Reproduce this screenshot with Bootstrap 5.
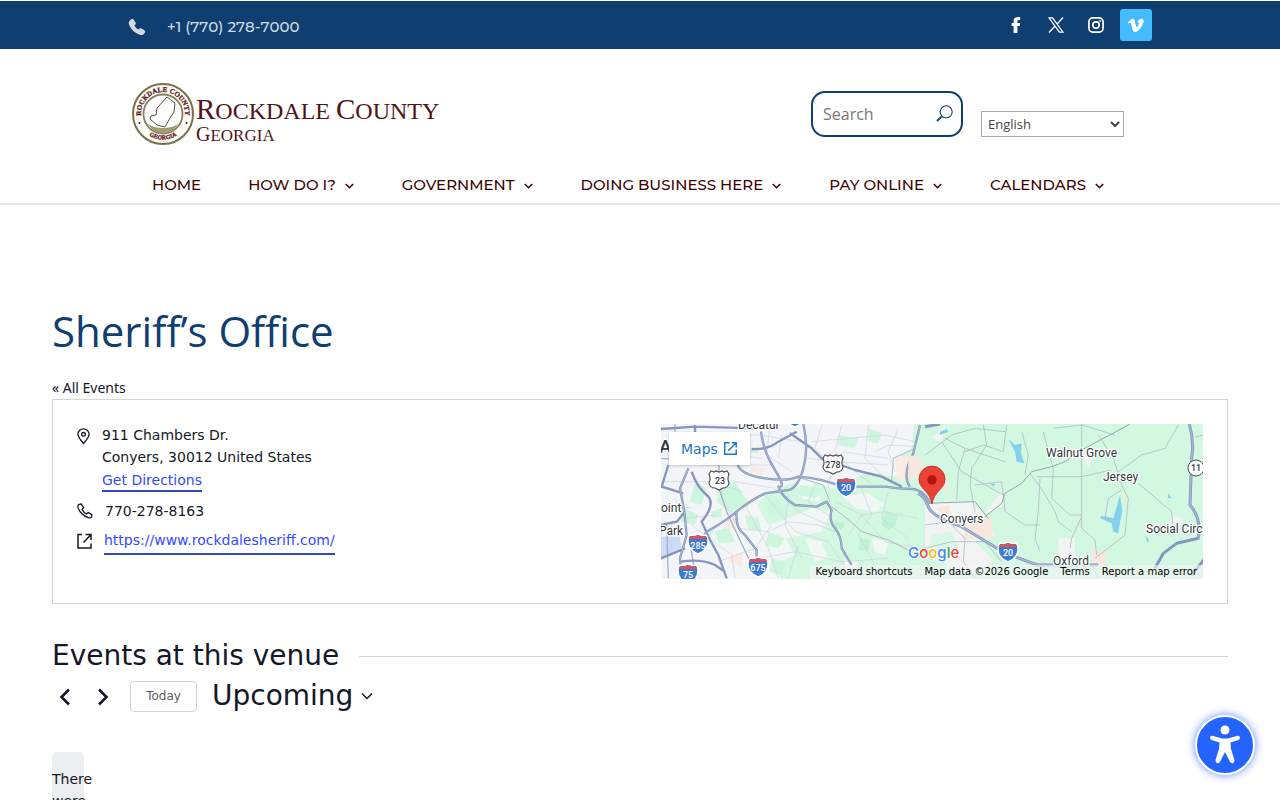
<!DOCTYPE html>
<html lang="en">
<head>
<meta charset="utf-8">
<meta name="viewport" content="width=device-width, initial-scale=1">
<title>Sheriff’s Office – Rockdale County, Georgia</title>
<link href="https://cdn.jsdelivr.net/npm/bootstrap@5.3.0/dist/css/bootstrap.min.css" rel="stylesheet">
<style>
:root{--navy:#0f3f70;--ink:#141827;--sans:"DejaVu Sans",sans-serif;--brand:Montserrat,Inter,sans-serif}
body{font-family:var(--sans);font-size:14px;line-height:22px;color:var(--ink);background:#fff;padding-top:1px}
.wrap-site{width:80%;margin:0 auto}
.wrap-main{padding:0 52px}
.topbar{background:var(--navy);min-height:48px}
.topbar .tel{font:500 15px/24px var(--brand);font-kerning:none;color:#cfd9e2;text-decoration:none;gap:21px;padding-top:3px}
.social{width:32px;height:32px;border-radius:3px;color:#fff}
.social-on{background:#45bbff}
.masthead{border-bottom:2px solid #e5e5e5}
.brandmark{color:#501418;font-family:"Liberation Serif",serif;text-decoration:none;margin-top:34px}
.brandmark .names{padding-top:12px}
.brandmark .t1{font-size:24px;line-height:28px}
.brandmark .t1 b{font-weight:400;font-size:29px}
.brandmark .t2{font-size:17px;line-height:18px}
.brandmark .t2 b{font-weight:400;font-size:20px}
.searchbox{width:152px;height:46px;border:2px solid var(--navy);border-radius:14px;padding:0 8px 0 10px;margin-top:42px}
.searchbox input{border:0;outline:0;width:100%;min-width:0;padding:0;font:16px/24px "Open Sans",sans-serif;background:none}
.searchbox input::placeholder{color:#757575}
.searchbox button{border:0;background:none;padding:0 0 2px;line-height:0;color:var(--navy)}
.lang{width:143px;height:26px;border:1px solid #a9a9a9;background:#fff;color:#444;font:13px/18px "Open Sans",sans-serif;padding:0 2px;margin:62px 28px 0 18px}
.mainnav{padding:26px 47px 6px 24px}
.mainnav a{font:500 15px/24px var(--brand);color:#3e0303;text-decoration:none;gap:8px}
.mainnav svg{margin-top:2px}
h1{font:400 42px/50px "Open Sans",sans-serif;color:var(--navy);margin:101px 0 20px}
.back{color:var(--ink);text-decoration:none;font:14px/23px "Noto Sans",sans-serif}
.venue{border:1px solid #d5d5d5;padding:24px}
.venue .row{--bs-gutter-x:42px}
.venue a{color:#334aff;text-decoration:none;border-bottom:2px solid #334aba}
.venue .go{line-height:20px;display:inline-block;margin-top:2px}
.venue .webrow{margin-top:5px}
.venue .web{line-height:26px}
.mapbox{height:155px;overflow:hidden;background:#d3f8e2}
.mapbox>svg{display:block;width:100%;height:100%}
.mapbox .open{top:8px;left:8px;background:#fff;color:#1a73c8;border:0;height:33px;padding:0 13px 0 12px;gap:6px;box-shadow:0 1px 3px rgba(0,0,0,.2)}
.mapbox .legal{bottom:0;right:0;font-size:10px;line-height:14px;background:rgba(245,245,245,.6)}
.mapbox .legal a,.mapbox .legal span{color:#000;border:0;padding:0 6px}
.venue-events{margin-top:32px;gap:20px}
h2{font:400 28px/40px var(--sans);margin:0}
.rule{height:1px;background:#d5d5d5}
.iconbtn{border:0;background:none;padding:0;width:26px;height:30px;color:var(--ink)}
.iconbtn+.iconbtn{margin:0 14px 0 12px}
.today{border:1px solid #d5d5d5;border-radius:4px;background:#fff;color:#5d5d5d;font:12px/18px var(--sans);height:31px;width:67px}
.upcoming{border:0;background:none;padding:0;font:28px/40px var(--sans);color:var(--ink);gap:8px;margin-left:15px}
.notice{width:32px;background:#eceef0;border-radius:4px;padding:16px 0;margin-top:36px}
.a11y{width:60px;height:60px;right:25px;bottom:25px;border:2px solid #fff;background:#2563ff;box-shadow:0 0 9px rgba(37,99,255,.75)}
</style>
</head>
<body>
<div class="topbar d-flex align-items-center">
  <div class="wrap-site d-flex justify-content-between align-items-center">
    <a class="tel d-flex align-items-center" href="tel:+17702787000">
      <svg width="18" height="18" viewBox="0 0 18 18" fill="currentColor" aria-hidden="true"><path d="M1.200 3.200 3.200 1.200Q4.600.3 5.500 1.500L7.600 4.400Q8.200 5.500 7.400 6.400L6.400 7.600Q7.500 10 10.400 11.600L11.600 10.600Q12.600 9.900 13.600 10.500L16.600 12.600Q17.700 13.500 17 14.600L15.300 16.500Q14 17.500 11.500 16.700 3.500 13.500 1 6.500.4 4.600 1.200 3.200Z"/></svg>
      <span>+1 (770) 278-7000</span></a>
    <nav class="d-flex gap-2" aria-label="Social">
      <a class="social d-flex align-items-center justify-content-center" href="#" aria-label="Facebook"><svg width="16" height="16" viewBox="0 0 16 16" fill="currentColor"><path d="M5.600 16V9H3.600V6H5.600V4.200Q5.600 0 10 0H12.200V3H10.600Q9.400 3 9.400 4.200V6H12.200L11.800 9H9.400V16Z"/></svg></a>
      <a class="social d-flex align-items-center justify-content-center" href="#" aria-label="X"><svg width="16" height="16" viewBox="0 0 16 16" fill="none" stroke="currentColor" stroke-width="1.300"><path d="M1 .8H4.600L15 15.200H11.400ZM15 .5 9 7.200M7 9 1 15.500"/></svg></a>
      <a class="social d-flex align-items-center justify-content-center" href="#" aria-label="Instagram"><svg width="16" height="16" viewBox="0 0 17 17" fill="none" stroke="currentColor" stroke-width="1.800"><rect x="1" y="1" width="15" height="15" rx="4"/><circle cx="8.500" cy="8.500" r="3.400"/><circle cx="12.800" cy="4.200" r=".6" fill="currentColor" stroke-width=".8"/></svg></a>
      <a class="social social-on d-flex align-items-center justify-content-center" href="#" aria-label="Vimeo"><svg width="16" height="15" viewBox="0 0 17 16" fill="currentColor"><path d="M0 4.500Q3.500 1 5 .9C7.500.7 7.500 4 8 6.500 8.500 9 8.800 9.600 9.400 9.500 10.300 9.200 11.800 6.500 11.700 5.500 11.600 4.400 10.600 4.600 9.800 4.900 10.600 2 12.500.5 14.700.7 17 .9 17 3.300 16.300 5.200 14.800 9 10.500 15 7.500 15 5.300 15 4.500 11 3.600 7.500 3.200 5.700 2.900 4.900 2.300 5Q1.800 5.100.8 5.800Z"/></svg></a>
    </nav>
  </div>
</div>

<header class="masthead">
  <div class="wrap-site">
    <div class="d-flex align-items-start">
      <a class="brandmark d-flex me-auto" href="#">
        <svg class="ms-1" width="64" height="64" viewBox="0 0 64 64" aria-hidden="true">
          <circle cx="31" cy="31" r="30" fill="#fffdf8" stroke="#77714b" stroke-width="2"/>
          <circle cx="31" cy="31" r="19.500" fill="#fff" stroke="#86805d" stroke-width="1.800"/>
          <path d="M16 41Q22 45 31 45 40 45 46 41 41 50 31 50.500 21 50 16 41Z" fill="#a19c74"/>
          <path d="M35 14 43 20 42 29 38 35 33 44 25 42 18 36 19 33 24 32 25 25Z" fill="#fff" stroke="#575044" stroke-width="1"/>
          <path id="arcTop" d="M12 42A22 22 0 1 1 50 42" fill="none"/>
          <path id="arcLow" d="M14 50A25.500 25.500 0 0 0 48 50" fill="none"/>
          <g font-family="Liberation Serif,serif" font-weight="700" font-size="7" fill="#601a20" stroke="#601a20" stroke-width=".3" text-anchor="middle">
            <text><textPath href="#arcTop" startOffset="50%">ROCKDALE COUNTY</textPath></text>
            <text font-size="6"><textPath href="#arcLow" startOffset="50%">GEORGIA</textPath></text></g>
          <circle cx="7.500" cy="40" r="1" fill="#601a20"/><circle cx="54.500" cy="40" r="1" fill="#601a20"/>
        </svg>
        <span class="names d-block"><span class="t1 d-block"><b>R</b>OCKDALE <b>C</b>OUNTY</span><span class="t2 d-block"><b>G</b>EORGIA</span></span>
      </a>
      <form class="searchbox d-flex align-items-center" role="search">
        <input type="search" placeholder="Search" aria-label="Search">
        <button type="button" aria-label="Search"><svg width="17" height="17" viewBox="0 0 17 17" fill="none" stroke="currentColor" stroke-width="1.100"><circle cx="10.200" cy="6.800" r="6"/><path d="M5.900 11.100 1 16" stroke-width="1.800"/></svg></button>
      </form>
      <select class="lang" aria-label="Language"><option>English</option></select>
    </div>
    <nav class="mainnav d-flex justify-content-between" aria-label="Main">
      <a class="d-flex align-items-center" href="#">HOME</a>
      <a class="d-flex align-items-center" href="#">HOW DO I? <svg width="11" height="8" viewBox="0 0 11 8" fill="none" stroke="currentColor" stroke-width="1.600"><path d="M1.800 2 5.500 5.700 9.200 2"/></svg></a>
      <a class="d-flex align-items-center" href="#">GOVERNMENT <svg width="11" height="8" viewBox="0 0 11 8" fill="none" stroke="currentColor" stroke-width="1.600"><path d="M1.800 2 5.500 5.700 9.200 2"/></svg></a>
      <a class="d-flex align-items-center" href="#">DOING BUSINESS HERE <svg width="11" height="8" viewBox="0 0 11 8" fill="none" stroke="currentColor" stroke-width="1.600"><path d="M1.800 2 5.500 5.700 9.200 2"/></svg></a>
      <a class="d-flex align-items-center" href="#">PAY ONLINE <svg width="11" height="8" viewBox="0 0 11 8" fill="none" stroke="currentColor" stroke-width="1.600"><path d="M1.800 2 5.500 5.700 9.200 2"/></svg></a>
      <a class="d-flex align-items-center" href="#">CALENDARS <svg width="11" height="8" viewBox="0 0 11 8" fill="none" stroke="currentColor" stroke-width="1.600"><path d="M1.800 2 5.500 5.700 9.200 2"/></svg></a>
    </nav>
  </div>
</header>

<main class="wrap-main">
  <h1>Sheriff’s Office</h1>
  <a class="back d-block" href="#">« All Events</a>
  <section class="venue">
    <div class="row">
      <div class="col-6">
        <div class="d-flex">
          <svg class="mt-1 me-2" width="13" height="17" viewBox="0 0 14 18" fill="none" stroke="currentColor" stroke-width="1.400"><path d="M7 16.500Q1 10 1 6.700A6 6 0 0 1 13 6.700Q13 10 7 16.500Z"/><circle cx="7" cy="6.700" r="2"/></svg>
          <address class="mb-0 ps-1">911 Chambers Dr.<br>Conyers, 30012 United States<br><a class="go" href="#">Get Directions</a></address>
        </div>
        <div class="d-flex align-items-center mt-2"><svg class="me-2" width="16" height="16" viewBox="0 0 17 17" fill="none" stroke="currentColor" stroke-width="1.400" stroke-linejoin="round"><path d="M1.500 1.800 4.500 1 7 5 5.300 6.800Q7 10 10 11.700L11.800 10 15.800 12.300 15.300 15Q14.300 16.300 12 15.600 4 12.500 1.200 5.200.7 3 1.500 1.800Z"/></svg><span class="ps-1">770-278-8163</span></div>
        <div class="webrow d-flex align-items-center"><svg class="me-2" width="15" height="16" viewBox="0 0 15 16" fill="none" stroke="currentColor" stroke-width="1.500"><path d="M5 1.500H1V15H14V10.500M8.500 1.500H14V7M14 1.500 6.500 9.500"/></svg><a class="web ms-1" href="#">https://www.rockdalesheriff.com/</a></div>
      </div>
      <div class="col-6">
        <div class="mapbox position-relative">
          <svg viewBox="0 0 542 155" preserveAspectRatio="xMidYMid slice" role="img" aria-label="Map of Conyers">
            <svg width="542" height="155" viewBox="0 0 1626 465">
              <rect width="1626" height="465" fill="#d3f8e2"/>
              <g transform="translate(-18 -27)" stroke-linejoin="round">
                <path d="M0 0H780L770 100 720 130 745 190 640 170 530 220 450 190 370 220 330 240 290 290 200 310 150 370 180 500H0Z" fill="#f4f5f8"/>
                <path d="M190 320 300 260 340 330 400 310 470 280 530 290 500 350 390 370 420 420 350 450 380 492 180 492 150 400Z" fill="#f3f6f7"/>
                <path d="M560 240 640 235 690 270 660 290 600 280ZM570 430 610 440 600 470 570 475ZM450 370 500 380 520 430 480 440ZM420 190 470 190 500 260 440 250ZM650 370 700 380 690 420 660 410Z" fill="#f0f7f5"/>
                <path d="M195 205 240 200 285 270 230 295 185 260ZM640 40 680 55 670 85 640 80ZM550 60 610 70 600 100 550 90ZM120 200 155 220 140 270 105 260ZM180 350 220 335 240 380 190 385ZM435 210 510 220 480 250 430 240ZM330 260 370 250 390 300 345 310ZM270 300 310 310 320 350 280 345ZM285 100 310 95 310 115 285 115ZM70 270 130 300 120 330 80 320ZM340 350 390 370 370 400 330 390ZM350 430 390 440 380 480 345 470ZM170 290 200 280 200 305 170 310Z" fill="#cdf6de"/>
                <path d="M720 120 770 125 765 205 725 190ZM290 150 330 160 320 180 285 175ZM215 310 245 310 235 345 205 340ZM230 420 265 410 260 455 220 440ZM40 120 60 130 45 145ZM520 130 545 150 530 170Z" fill="#f8ebe4"/>
                <path d="M690 290 730 300 720 335 700 345 680 330ZM615 370 645 375 640 410 610 405ZM540 320 570 325 560 345 535 340Z" fill="#bff1d4"/>
                <path d="M18 365H75L80 398 18 430Z" fill="#cbdaf5"/>
                <g fill="none" stroke="#ccd2dc" stroke-width="2">
                  <path d="M120 60H310L440 80M270 25V140M345 30 335 120 410 170M500 30 480 100 530 150 520 220M470 80 690 60 780 80M560 30 540 110 600 170 650 205M640 30 630 130 690 190M18 200H180L260 230M60 250 90 310 180 300M110 330 230 420 240 490M200 190V250L250 340 340 350 400 320 490 330 540 350M270 270 340 400 370 490M330 240 420 350 520 380 580 470M400 240 390 330 440 430M480 210 460 260 520 300M540 260 620 300 690 380 790 400M620 220 650 300 610 360 660 450M700 230 680 310 760 370M310 430 420 410 560 440 700 430M430 390 400 490M660 110 700 90 780 95M730 40 700 110 720 170M560 110 700 130M240 200 360 220 430 290 520 330M18 270H60L110 280M50 320V400M140 150H350M250 120 320 130M580 360 620 300 690 290 790 310M380 60 370 130M460 130 540 140 700 150M190 440 300 400 350 330"/>
                </g>
                <g fill="none" stroke="#a7afb9" stroke-width="2.500"><path d="M530 275Q590 320 620 350L700 375 760 405 790 400M440 190 505 210 525 260M710 200 715 130 780 100"/></g>
                <path d="M192 130V220L215 290 245 355 295 460M60 27V120M18 130 120 140M35 330 40 490M105 380 120 480M120 60 270 55" fill="none" stroke="#a5b0c8" stroke-width="4"/>
                <g id="hwWest" fill="none" stroke="#8696bc" stroke-width="7">
                  <path d="M100 160 75 220 88 290 95 360 75 430 80 492M248 150Q260 180 330 190T430 185Q500 190 560 215H690Q730 222 770 222T840 290M18 42 120 35 300 40M318 50Q325 110 360 165T370 215Q385 250 420 270L485 275 515 260 530 285Q520 315 540 340T560 400L590 450M445 27Q462 100 445 160T400 225L330 235Q280 260 245 290T155 350L130 390M290 102Q340 105 370 80L425 50M405 55 470 100 500 130 600 165 680 185 740 215M795 30 775 115Q740 180 765 215M245 290Q240 340 270 360L305 405V470M110 170Q125 215 155 240T140 320Q160 370 190 420L215 490M40 150 20 215 85 235M18 430 90 400M75 440Q140 430 180 450L210 470M18 330 65 320 90 290M120 30V90"/>
                </g>
                <path d="M100 160 75 220 88 290 95 360 75 430 80 492M248 150Q260 180 330 190T430 185Q500 190 560 215H690Q730 222 770 222T840 290M318 50Q325 110 360 165T370 215Q385 250 420 270L485 275 515 260 530 285Q520 315 540 340T560 400L590 450M445 27Q462 100 445 160T400 225L330 235Q280 260 245 290T155 350L130 390M795 30 775 115Q740 180 765 215M245 290Q240 340 270 360L305 405V470" fill="none" stroke="#a8b7d4" stroke-width="3"/>
              </g>
              <g transform="translate(792 -27)" stroke-linejoin="round">
                <path d="M0 270 60 260 140 260 195 320 210 365 150 380 210 440 110 480 0 400ZM60 30 50 80 20 70ZM175 300 230 230 235 270ZM400 370 450 370 450 420 400 430ZM470 110 500 130 490 160ZM740 300 775 310 760 350 735 345Z" fill="#f2f4f4"/>
                <path d="M20 360 80 350 100 400 60 440 10 420Z" fill="#d9f7e6"/>
                <path d="M30 280 70 270 90 330ZM150 290 200 310 205 370 110 370ZM500 400 545 410 540 450 500 450ZM50 190 70 200 60 240ZM-50 120-10 130 0 180-50 190Z" fill="#f7e8df"/>
                <path d="M250 72 270 90 290 85 288 115 298 145 275 140 270 110ZM585 240 592 290 585 320 580 355 565 350 560 325 525 310 530 302 565 310ZM45 60 70 50 65 42 45 50ZM660 360 672 375 668 385ZM730 235 740 250 728 250ZM195 205 212 207 205 215Z" fill="#84d1ee"/>
                <g fill="none" stroke="#b0bcc0" stroke-width="2.500">
                  <path d="M60 70 120 100 240 140M175 30 185 90 140 160 135 210 150 290M245 30 235 110 175 90 120 110M50 80 110 170 235 240M120 100 100 170 95 255M290 50 310 120 300 180M355 50 370 110 385 160 380 250 435 300H470M470 27V340L510 375 515 420M335 185 470 185 560 165M315 175 355 230 390 290 400 320 440 350M345 190 340 290 330 370 345 410M470 305 440 370 435 400M235 235 240 290 300 330H345M520 60 565 130 590 210 610 250 600 360 510 430M590 225 550 250 540 310M640 205 740 290 745 340M760 30 720 100 650 120 580 170M0 120 80 60 150 40 240 50M385 40 470 30 570 60M0 330 70 320 120 370 115 440 150 490M0 400 80 380 180 380 230 440M810 65 840 60M500 450 520 490M150 210 230 200 235 240"/>
                </g>
                <path d="M180 305 230 265 240 235 290 205 320 170 380 155 420 140 470 105 615 27M0 265 150 260 190 310" fill="none" stroke="#97a6ad" stroke-width="3"/>
                <g fill="none" stroke="#8696bc" stroke-width="9"><path d="M-20 235Q0 245 10 275T110 335L200 390Q230 410 270 425T340 450H520M793 27Q808 80 800 130L795 270Q830 310 820 370L755 385 715 415 690 460M0 35 45 27M840 430 800 480"/></g>
                <g fill="none" stroke="#a8b7d4" stroke-width="4"><path d="M-20 235Q0 245 10 275T110 335L200 390Q230 410 270 425T340 450H520M793 27Q808 80 800 130L795 270Q830 310 820 370"/></g>
              </g>
            </svg>
            <g font-family="Roboto,sans-serif" font-size="12" fill="#33383d" stroke="#fff" stroke-width="2.500" paint-order="stroke" stroke-linejoin="round">
              <text x="77" y="5">Decatur</text><text x="-2" y="29" font-size="19" font-weight="500">A</text>
              <text x="0" y="88">oint</text><text x="-2" y="111">Park</text>
              <text x="385" y="33">Walnut Grove</text><text x="442" y="57">Jersey</text><text x="279" y="99">Conyers</text><text x="485" y="109">Social Circ</text><text x="392" y="141">Oxford</text>
            </g>
            <defs><g id="shield"><path d="M-8-9Q-4-8 0-10 4-8 8-9 10-7 10-3 10 6 0 10-10 6-10-3-10-7-8-9Z" fill="#3c7bd0" stroke="#fff" stroke-width="1.400"/><path d="M-8-8Q-4-7 0-9 4-7 8-8L9-5H-9Z" fill="#d95555"/></g>
            <path id="usroute" d="M-8-9-5-8-3-9 0-8 3-9 5-8 8-9 10-6Q8-1 10 3 9 8 4 8L0 10-4 8Q-9 8-10 3-8-1-10-6Z" fill="#fff" stroke="#4a4d52" stroke-width="1.200"/></defs>
            <use href="#shield" x="185" y="63"/><use href="#shield" x="347" y="128"/><use href="#shield" x="37" y="120"/><use href="#shield" x="97" y="143"/><use href="#shield" x="27" y="150"/><use href="#shield" x="134" y="-7"/>
            <use href="#usroute" x="58" y="56"/><use href="#usroute" x="172" y="40"/>
            <circle cx="535" cy="44" r="8" fill="#fff" stroke="#4a4d52"/>
            <g font-family="Roboto,sans-serif" font-weight="500" font-size="9" fill="#fff" text-anchor="middle"><text x="185" y="67">20</text><text x="347" y="132">20</text><text x="37" y="125">285</text><text x="97" y="147">675</text><text x="27" y="154">75</text><g fill="#33383d"><text x="59" y="60">23</text><text x="172" y="44">278</text><text x="535" y="47">11</text></g></g>
            <path d="M271 80Q270 72 262 64.500A13 13 0 1 1 280 64.500Q272 72 271 80Z" fill="#ea4335" stroke="#c5221f" stroke-width=".8"/><circle cx="271" cy="56" r="4.700" fill="#b31412"/>
            <text x="247" y="134" font-family="Inter,sans-serif" font-weight="500" font-size="15" stroke="#fff" stroke-width="1.500" paint-order="stroke"><tspan fill="#4285f4">G</tspan><tspan fill="#ea4335">o</tspan><tspan fill="#fbbc04">o</tspan><tspan fill="#4285f4">g</tspan><tspan fill="#34a853">l</tspan><tspan fill="#ea4335">e</tspan></text>
          </svg>
          <a class="open position-absolute d-flex align-items-center" href="#">Maps <svg width="13" height="13" viewBox="0 0 12 12" fill="none" stroke="currentColor" stroke-width="1.300"><path d="M5 .7H.7V11.300H11.300V7M7 .7H11.300V5M11.300.7 4 8"/></svg></a>
          <div class="legal position-absolute d-flex"><a href="#">Keyboard shortcuts</a><span>Map data ©2026 Google</span><a href="#">Terms</a><a href="#">Report a map error</a></div>
        </div>
      </div>
    </div>
  </section>
  <div class="venue-events d-flex align-items-center"><h2>Events at this venue</h2><div class="rule flex-grow-1"></div></div>
  <div class="d-flex align-items-center">
    <button class="iconbtn" aria-label="Previous events"><svg width="12" height="18" viewBox="0 0 12 18" fill="none" stroke="currentColor" stroke-width="2.500"><path d="M10 1.500 2.500 9 10 16.500"/></svg></button>
    <button class="iconbtn" aria-label="Next events"><svg width="12" height="18" viewBox="0 0 12 18" fill="none" stroke="currentColor" stroke-width="2.500"><path d="M2 1.500 9.500 9 2 16.500"/></svg></button>
    <button class="today">Today</button>
    <button class="upcoming d-flex align-items-center">Upcoming <svg width="12" height="8" viewBox="0 0 12 8" fill="none" stroke="currentColor" stroke-width="1.500"><path d="M1 1.500 6 6.500 11 1.500"/></svg></button>
  </div>
  <div class="notice">There were</div>
</main>
<button class="a11y position-fixed rounded-circle p-0 d-flex align-items-center justify-content-center" aria-label="Accessibility">
  <svg width="32" height="40" viewBox="0 0 32 40" fill="#fff"><circle cx="16" cy="5" r="4.500"/><path d="M3.500 10.800 13 13.500H19L28.500 10.800Q30.800 10.500 31 12.800 31 14.300 29.500 14.900L21.500 17.500 22 24 25.500 35Q25.800 37.500 23.700 38.200 21.700 38.500 20.800 36.500L16 27 11.200 36.500Q10.300 38.500 8.300 38.200 6.200 37.500 6.500 35L10 24 10.500 17.500 2.500 14.900Q1 14.300 1 12.800 1.200 10.500 3.500 10.800Z"/></svg>
</button>
<script src="https://cdn.jsdelivr.net/npm/bootstrap@5.3.0/dist/js/bootstrap.bundle.min.js"></script>
</body>
</html>
